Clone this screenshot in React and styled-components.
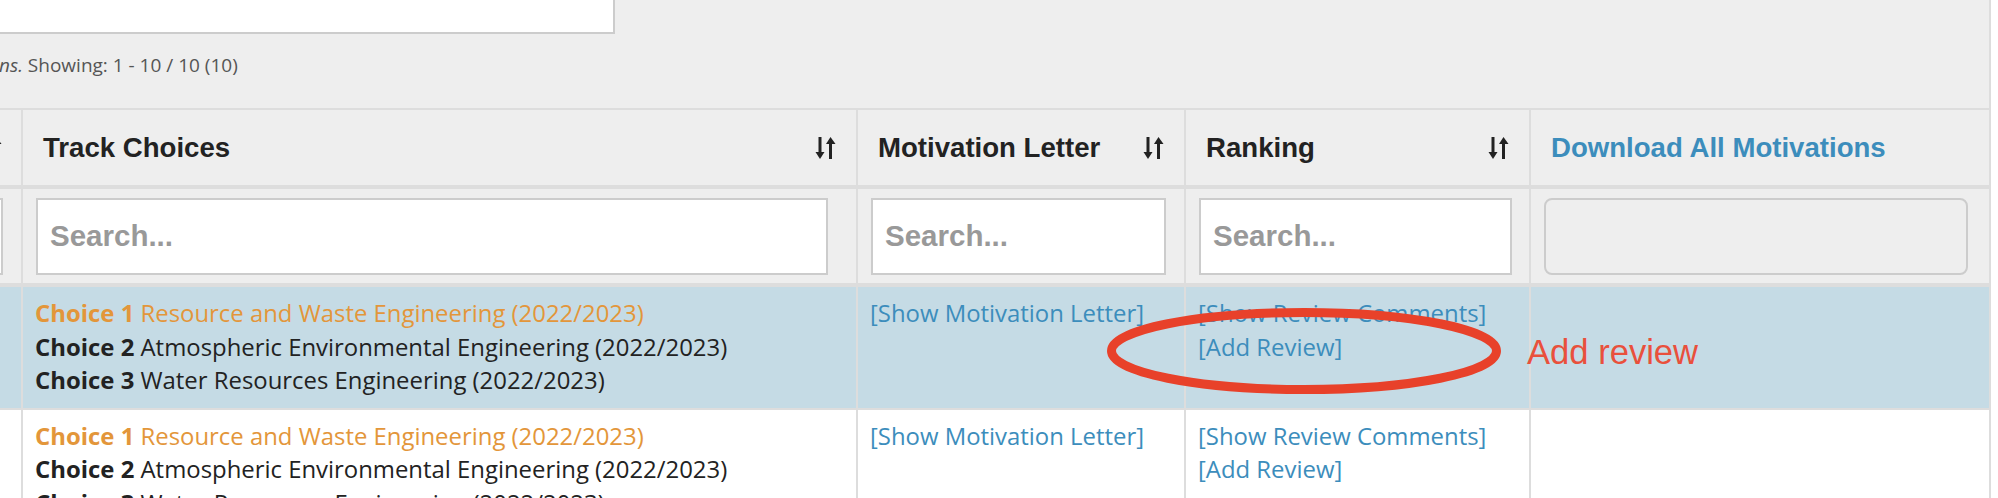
import React from 'react';
import styled, { createGlobalStyle } from 'styled-components';

const GlobalStyle = createGlobalStyle`
  html, body {
    margin: 0;
    overflow: hidden;
    background: #fff;
  }
  body {
    font-family: "Open Sans", "Liberation Sans", sans-serif;
  }
`;

// Page layout
const Page = styled.div`
  position: relative;
  width: 1989px;
  height: 498px;
  background: #eee;
  border-right: 2px solid #ddd;
`;

const TopSearch = styled.div`
  width: 613px;
  height: 32px;
  background: #fff;
  border-right: 2px solid #ccc;
  border-bottom: 2px solid #ccc;
`;

const Summary = styled.div`
  box-sizing: border-box;
  height: 74px;
  padding-top: 18px;
  font-size: 19px;
  line-height: 26px;
  color: #555;
  text-indent: -1px;

  em {
    font-style: italic;
  }
`;

// Table
const Table = styled.table`
  width: 1989px;
  table-layout: fixed;
  border-collapse: separate;
  border-spacing: 0;
`;

const HeadCell = styled.th`
  box-sizing: border-box;
  height: 81px;
  padding: ${(p) => (p.$edge ? '0 19px 0 0' : '0 20px')};
  border-top: 2px solid #ddd;
  border-bottom: 4px solid #ddd;
  border-right: ${(p) => (p.$last ? 'none' : '2px solid #ddd')};
  text-align: left;
  vertical-align: middle;
  font-family: "Liberation Sans", Arial, sans-serif;
  font-size: 27.6px;
  font-weight: bold;
  color: ${(p) => (p.$link ? '#3c8dbc' : '#222')};
  white-space: nowrap;
`;

const HeadInner = styled.div`
  display: flex;
  align-items: center;
  justify-content: ${(p) => (p.$edge ? 'flex-end' : 'space-between')};
`;

const FilterCell = styled.td`
  box-sizing: border-box;
  height: 98px;
  padding: ${(p) => (p.$edge ? '0 18px 0 0' : '0 0 0 13px')};
  border-bottom: 4px solid #ddd;
  border-right: ${(p) => (p.$last ? 'none' : '2px solid #ddd')};
  vertical-align: middle;
`;

const FilterWrap = styled.div`
  display: flex;
  justify-content: ${(p) => (p.$edge ? 'flex-end' : 'flex-start')};
`;

const SearchInput = styled.input`
  box-sizing: border-box;
  flex: none;
  width: ${(p) => p.$w}px;
  height: 77px;
  margin: 0;
  padding: 0 12px;
  border: 2px solid #ccc;
  border-radius: ${(p) => (p.$disabled ? '8px' : '0')};
  background: ${(p) => (p.$disabled ? '#eee' : '#fff')};
  font-family: "Liberation Sans", Arial, sans-serif;
  font-size: 29.5px;
  font-weight: bold;
  color: #333;
  outline: none;

  &::placeholder {
    color: #999;
    opacity: 1;
  }
`;

const Row = styled.tr`
  background: ${(p) => (p.$active ? '#c5dbe5' : '#fff')};
`;

const DataCell = styled.td`
  box-sizing: border-box;
  padding: 9px 12px 11px;
  border-bottom: 2px solid #ddd;
  border-right: ${(p) => (p.$last ? 'none' : '2px solid #ddd')};
  vertical-align: top;
  font-size: 23.9px;
  line-height: 33.5px;
  color: #222;
  white-space: nowrap;
`;

const Choice = styled.div`
  color: ${(p) => (p.$first ? '#e3963a' : '#222')};

  b {
    font-weight: 700;
  }
`;

const Link = styled.a`
  display: block;
  color: #3c8dbc;
  text-decoration: none;
`;

// Annotation layer
const Ellipse = styled.svg`
  position: absolute;
  left: 1107px;
  top: 308px;
`;

const Note = styled.div`
  position: absolute;
  left: 1527px;
  top: 332px;
  font-family: "Liberation Sans", Arial, sans-serif;
  font-size: 34.6px;
  line-height: 40px;
  color: #e9503c;
`;

const SortIcon = () => (
  <svg width="21" height="22" viewBox="0 0 21 22" style={{ flex: 'none' }}>
    <rect x="3.5" y="0" width="3" height="16" fill="#222" />
    <polygon points="0.5,15 9.5,15 5,22" fill="#222" />
    <rect x="14" y="6" width="3" height="16" fill="#222" />
    <polygon points="11,7 20.5,7 15.5,0" fill="#222" />
  </svg>
);

const columns = [
  { title: 'Track Choices', sortable: true, input: 792 },
  { title: 'Motivation Letter', sortable: true, input: 295 },
  { title: 'Ranking', sortable: true, input: 313 },
  { title: 'Download All Motivations', link: true, input: 424, disabled: true },
];

const choices = [
  'Resource and Waste Engineering (2022/2023)',
  'Atmospheric Environmental Engineering (2022/2023)',
  'Water Resources Engineering (2022/2023)',
];

const rows = [{ id: 1, active: true }, { id: 2, active: false }];

function App() {
  return (
    <>
      <GlobalStyle />
      <Page>
        <TopSearch />
        <Summary>
          <em>ns.</em> Showing: 1 - 10 / 10 (10)
        </Summary>

        <Table>
          <colgroup>
            <col style={{ width: 23 }} />
            <col style={{ width: 835 }} />
            <col style={{ width: 328 }} />
            <col style={{ width: 345 }} />
            <col style={{ width: 458 }} />
          </colgroup>
          <thead>
            <tr>
              <HeadCell $edge>
                <HeadInner $edge>
                  <SortIcon />
                </HeadInner>
              </HeadCell>
              {columns.map((c, i) => (
                <HeadCell key={c.title} $link={c.link} $last={i === columns.length - 1}>
                  <HeadInner>
                    <span>{c.title}</span>
                    {c.sortable && <SortIcon />}
                  </HeadInner>
                </HeadCell>
              ))}
            </tr>
            <tr>
              <FilterCell $edge>
                <FilterWrap $edge>
                  <SearchInput $w={300} placeholder="Search..." />
                </FilterWrap>
              </FilterCell>
              {columns.map((c, i) => (
                <FilterCell key={c.title} $last={i === columns.length - 1}>
                  <FilterWrap>
                    {c.disabled ? (
                      <SearchInput $w={c.input} $disabled readOnly />
                    ) : (
                      <SearchInput $w={c.input} placeholder="Search..." />
                    )}
                  </FilterWrap>
                </FilterCell>
              ))}
            </tr>
          </thead>
          <tbody>
            {rows.map((r) => (
              <Row key={r.id} $active={r.active}>
                <DataCell />
                <DataCell>
                  {choices.map((name, i) => (
                    <Choice key={name} $first={i === 0}>
                      <b>Choice {i + 1}</b> {name}
                    </Choice>
                  ))}
                </DataCell>
                <DataCell>
                  <Link href="#">[Show Motivation Letter]</Link>
                </DataCell>
                <DataCell>
                  <Link href="#">[Show Review Comments]</Link>
                  <Link href="#">[Add Review]</Link>
                </DataCell>
                <DataCell $last />
              </Row>
            ))}
          </tbody>
        </Table>

        <Ellipse width="394" height="86" viewBox="0 0 394 86">
          <ellipse cx="197" cy="43" rx="192.5" ry="38.5" fill="none" stroke="#e8412a" strokeWidth="9" />
        </Ellipse>
        <Note>Add review</Note>
      </Page>
    </>
  );
}

export default App;
